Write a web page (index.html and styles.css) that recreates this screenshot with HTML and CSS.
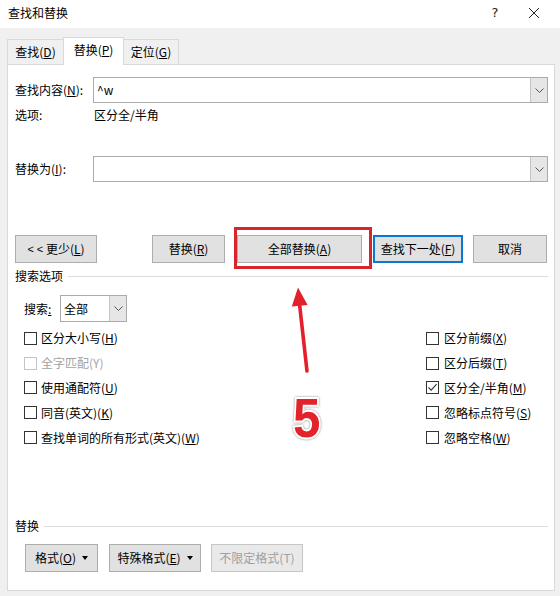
FILE: index.html
```html
<!DOCTYPE html>
<html lang="zh-CN">
<head>
<meta charset="utf-8">
<title>查找和替换</title>
<link rel="stylesheet" href="styles.css">
</head>
<body>
<div class="titlebar">
  <span class="title">查找和替换</span>
  <span class="tb-help">?</span>
  <span class="tb-close"><svg width="12" height="12" viewBox="0 0 12 12"><path d="M1 1L11 11M11 1L1 11" stroke="#222" stroke-width="1" fill="none"/></svg></span>
</div>

<div class="tabs">
  <div class="tab tab-find">查找(<u>D</u>)</div>
  <div class="tab tab-replace active">替换(<u>P</u>)</div>
  <div class="tab tab-goto">定位(<u>G</u>)</div>
</div>

<div class="panel">
  <div class="field-row row-find">
    <span class="field-label">查找内容(<u>N</u>):</span>
    <div class="combo"><span class="combo-text">^w</span><span class="drop"><svg width="9" height="5" viewBox="0 0 9 5"><path d="M0.5 0.5L4.5 4.5L8.5 0.5" stroke="#555" stroke-width="1" fill="none"/></svg></span></div>
  </div>
  <div class="opt-row">
    <span class="field-label">选项:</span>
    <span>区分全/半角</span>
  </div>
  <div class="field-row row-replace">
    <span class="field-label">替换为(<u>I</u>):</span>
    <div class="combo"><span class="combo-text"></span><span class="drop"><svg width="9" height="5" viewBox="0 0 9 5"><path d="M0.5 0.5L4.5 4.5L8.5 0.5" stroke="#555" stroke-width="1" fill="none"/></svg></span></div>
  </div>

  <div class="btn-row">
    <div class="btn btn-less"><span class="chev">&lt; &lt;</span>&nbsp;更少(<u>L</u>)</div>
    <div class="btn btn-replace">替换(<u>R</u>)</div>
    <div class="btn btn-all">全部替换(<u>A</u>)</div>
    <div class="btn btn-next">查找下一处(<u>F</u>)</div>
    <div class="btn btn-cancel">取消</div>
  </div>

  <div class="group-head head-search"><span>搜索选项</span><span class="rule"></span></div>

  <div class="opt-grid">
    <div class="search-row">
      <span class="search-label">搜索<u>:</u></span>
      <div class="select"><span class="select-text">全部</span><span class="drop"><svg width="9" height="5" viewBox="0 0 9 5"><path d="M0.5 0.5L4.5 4.5L8.5 0.5" stroke="#555" stroke-width="1" fill="none"/></svg></span></div>
    </div>
    <div></div>
    <label class="chk"><span class="box"></span>区分大小写(<u>H</u>)</label>
    <label class="chk chk-right"><span class="box"></span>区分前缀(<u>X</u>)</label>
    <label class="chk disabled"><span class="box"></span>全字匹配(Y)</label>
    <label class="chk chk-right"><span class="box"></span>区分后缀(<u>T</u>)</label>
    <label class="chk"><span class="box"></span>使用通配符(<u>U</u>)</label>
    <label class="chk chk-right"><span class="box checked"><svg width="11" height="11" viewBox="0 0 11 11"><path d="M1.5 5.5L4.2 8.2L9.6 2.2" stroke="#333" stroke-width="1.1" fill="none"/></svg></span>区分全/半角(<u>M</u>)</label>
    <label class="chk"><span class="box"></span>同音(英文)(<u>K</u>)</label>
    <label class="chk chk-right"><span class="box"></span>忽略标点符号(<u>S</u>)</label>
    <label class="chk"><span class="box"></span>查找单词的所有形式(英文)(<u>W</u>)</label>
    <label class="chk chk-right"><span class="box"></span>忽略空格(<u>W</u>)</label>
  </div>

  <div class="group-head head-replace"><span>替换</span><span class="rule"></span></div>

  <div class="fmt-row">
    <div class="btn btn-fmt">格式(<u>O</u>)<span class="tri"></span></div>
    <div class="btn btn-special">特殊格式(<u>E</u>)<span class="tri"></span></div>
    <div class="btn btn-nofmt disabled">不限定格式(T)</div>
  </div>
</div>

<svg class="anno-arrow" width="40" height="100" viewBox="0 0 40 100">
  <path d="M19.3 22 L27 91" stroke="#e3202b" stroke-width="3.6" stroke-linecap="round" fill="none"/>
  <path d="M18 7.5 L27.6 25 L11.8 26.6 Z" fill="#e3202b"/>
</svg>
<div class="anno-num">5</div>
</body>
</html>
```

FILE: styles.css
```css
html, body {
  margin: 0;
  padding: 0;
}
body {
  width: 560px;
  height: 596px;
  overflow: hidden;
  position: relative;
  background: #f0f0f0;
  font-family: "Noto Sans CJK SC", "Noto Sans", sans-serif;
  font-size: 12px;
  color: #000;
  line-height: 16px;
}
u {
  text-decoration: underline;
  text-underline-offset: 1px;
}

/* title bar */
.titlebar {
  height: 28px;
  background: #fff;
  display: flex;
  align-items: center;
  padding-left: 8px;
}
.title {
  flex: 1;
  position: relative;
  top: -1px;
}
.tb-help {
  width: 24px;
  text-align: center;
  font-family: "DejaVu Sans", sans-serif;
  font-size: 13px;
  color: #222;
  margin-right: 15px;
  position: relative;
  top: -1px;
}
.tb-close {
  width: 24px;
  display: flex;
  justify-content: center;
  margin-right: 14px;
  position: relative;
  top: -1px;
}

/* tabs */
.tabs {
  height: 37px;
  margin-bottom: -1px;
  padding-left: 7px;
  display: flex;
  align-items: flex-end;
  position: relative;
  z-index: 1;
  box-sizing: border-box;
}
.tab {
  box-sizing: border-box;
  height: 25px;
  margin-bottom: 1px;
  border: 1px solid #d9d9d9;
  border-bottom: none;
  background: #f0f0f0;
  display: flex;
  align-items: center;
  justify-content: center;
}
.tab + .tab {
  margin-left: -1px;
}
.tab-find { width: 57px; }
.tab-replace { width: 61px; }
.tab-goto { width: 56px; }
.tab.active {
  height: 28px;
  margin-bottom: 0;
  background: #fff;
  padding-bottom: 3px;
  position: relative;
  z-index: 2;
}

/* panel */
.panel {
  box-sizing: border-box;
  width: 548px;
  height: 527px;
  margin-left: 7px;
  background: #fff;
  border: 1px solid #d9d9d9;
  padding: 0 6px 0 7px;
}
.field-row {
  display: flex;
  align-items: center;
  height: 26px;
}
.row-find { margin-top: 12px; }
.row-replace { margin-top: 33px; }
.field-label {
  width: 78px;
  flex: none;
}
.combo {
  flex: 1;
  box-sizing: border-box;
  height: 26px;
  border: 1px solid #ababab;
  display: flex;
  align-items: stretch;
}
.combo-text {
  flex: 1;
  padding-left: 3px;
  display: flex;
  align-items: center;
}
.drop {
  width: 17px;
  flex: none;
  box-sizing: border-box;
  background: #e6e6e6;
  border-left: 1px solid #c4c4c4;
  display: flex;
  align-items: center;
  justify-content: center;
}
.opt-row {
  margin-top: 4px;
  height: 16px;
  display: flex;
  align-items: center;
}
.opt-row .field-label { width: 79px; }

/* buttons */
.btn-row {
  margin-top: 53px;
  display: flex;
}
.btn {
  box-sizing: border-box;
  height: 28px;
  background: #e1e1e1;
  border: 1px solid #adadad;
  display: flex;
  align-items: center;
  justify-content: center;
  flex: none;
  white-space: pre;
}
.chev {
  font-family: "Liberation Sans", sans-serif;
  font-size: 11px;
}
.btn-less { width: 82px; }
.btn-replace { width: 73px; margin-left: 55px; }
.btn-all {
  width: 125px;
  margin-left: 12px;
  position: relative;
}
.btn-all::after {
  content: "";
  position: absolute;
  left: -4px;
  top: -9px;
  right: -11px;
  bottom: -7px;
  border: 3px solid #d7242d;
}
.btn-next {
  width: 90px;
  margin-left: 11px;
  border: 2px solid #0a78d0;
}
.btn-cancel { width: 74px; margin-left: 10px; }

/* group headings */
.group-head {
  height: 16px;
  display: flex;
  align-items: center;
}
.head-search { margin-top: 5px; }
.head-replace { margin-top: 68px; }
.group-head .rule {
  flex: 1;
  height: 1px;
  background: #dcdcdc;
  margin-left: 5px;
  margin-top: 1px;
}

/* option grid */
.opt-grid {
  margin-left: 9px;
  margin-top: 11px;
  display: grid;
  grid-template-columns: 402px 1fr;
  grid-template-rows: 31px repeat(5, 24.8px);
}
.search-row {
  display: flex;
  align-items: center;
  height: 27px;
  align-self: start;
}
.search-label { width: 36px; }
.select {
  box-sizing: border-box;
  width: 67px;
  height: 27px;
  border: 1px solid #ababab;
  display: flex;
  align-items: stretch;
}
.select-text {
  flex: 1;
  padding-left: 3px;
  display: flex;
  align-items: center;
}
.chk {
  display: flex;
  align-items: center;
}
.box {
  box-sizing: border-box;
  width: 13px;
  height: 13px;
  border: 1px solid #333;
  margin-right: 4px;
  flex: none;
  display: flex;
  align-items: center;
  justify-content: center;
}
.chk-right .box { margin-right: 5px; }
.chk.disabled { color: #a3a3a3; }
.chk.disabled .box { border-color: #c4c4c4; }

/* format buttons */
.fmt-row {
  margin-top: 10px;
  margin-left: 10px;
  display: flex;
}
.btn-fmt { width: 73px; }
.btn-special { width: 92px; margin-left: 11px; }
.btn-nofmt { width: 92px; margin-left: 10px; }
.btn.disabled {
  color: #a0a0a0;
  background: #e9e9e9;
  border-color: #c6c6c6;
}
.tri {
  width: 0;
  height: 0;
  border-left: 3.5px solid transparent;
  border-right: 3.5px solid transparent;
  border-top: 4px solid #000;
  margin-left: 6px;
}

/* annotations */
.anno-arrow {
  position: absolute;
  left: 280px;
  top: 280px;
}
.anno-num {
  position: absolute;
  left: 293px;
  top: 390px;
  font-family: "Liberation Sans", sans-serif;
  font-weight: bold;
  font-size: 56px;
  line-height: 56px;
  color: #e3232c;
  -webkit-text-stroke: 4px #fff;
  paint-order: stroke fill;
  transform: scaleX(0.88);
  transform-origin: left top;
  filter: drop-shadow(0 0 1px rgba(0,0,0,0.45));
}
```
